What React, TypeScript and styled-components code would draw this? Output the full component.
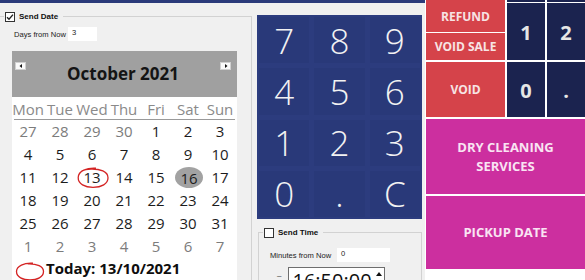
import React from 'react';
import styled, { createGlobalStyle } from 'styled-components';

const GlobalStyle = createGlobalStyle`
  html, body { margin: 0; padding: 0; }
  body {
    width: 585px;
    height: 280px;
    overflow: hidden;
    background: #f0f0f0;
    font-family: "Open Sans", "Noto Sans", sans-serif;
  }
  *, *::before, *::after { box-sizing: border-box; }
`;

const Screen = styled.div`
  width: 585px;
  height: 280px;
  display: flex;
  overflow: hidden;
  background: #f0f0f0;
`;

const LeftArea = styled.div`
  width: 425px;
  flex: none;
  display: flex;
  flex-direction: column;
`;

const TitleStrip = styled.div`
  height: 3px;
  flex: none;
  background: #2b3a7a;
`;

const Workspace = styled.div`
  flex: 1;
  min-height: 0;
  display: flex;
`;

const GroupBox = styled.div<{ $width: number; $top: number; $left: number; $leftBorder?: boolean }>`
  width: ${p => p.$width}px;
  flex: none;
  margin-top: ${p => p.$top}px;
  margin-left: ${p => p.$left}px;
  border-top: 1px solid #d2d2d2;
  border-right: 1px solid #d2d2d2;
  border-left: ${p => (p.$leftBorder ? '1px solid #d2d2d2' : 'none')};
  display: flex;
  flex-direction: column;
  align-items: flex-start;
`;

const GroupHeader = styled.div`
  margin-top: -6px;
  margin-left: 4px;
  height: 11px;
  padding: 0 5px 0 1px;
  display: inline-flex;
  align-items: center;
  gap: 4px;
  background: #f0f0f0;
`;

const CheckBox = styled.span`
  width: 10px;
  height: 10px;
  border: 1px solid #333;
  background: #fff;
  display: inline-flex;
  align-items: center;
  justify-content: center;
`;

const GroupLabel = styled.span`
  font-family: "Liberation Sans", Arial, sans-serif;
  font-weight: bold;
  font-size: 8px;
  color: #111;
  line-height: 11px;
`;

const FieldRow = styled.div<{ $top: number; $left: number }>`
  margin-top: ${p => p.$top}px;
  margin-left: ${p => p.$left}px;
  height: 14px;
  display: flex;
  align-items: center;
`;

const FieldLabel = styled.span<{ $width: number }>`
  width: ${p => p.$width}px;
  font-family: "Liberation Sans", Arial, sans-serif;
  font-size: 7.6px;
  color: #222;
  white-space: nowrap;
`;

const FieldValue = styled.span<{ $width: number }>`
  width: ${p => p.$width}px;
  height: 14px;
  background: #fff;
  padding: 0 0 0 4px;
  font-family: "Liberation Sans", Arial, sans-serif;
  font-size: 7.6px;
  line-height: 11px;
  color: #222;
`;

/* Calendar */
const Calendar = styled.div`
  margin-top: 10px;
  margin-left: 12px;
  width: 225px;
  flex: 1;
  display: flex;
  flex-direction: column;
`;

const CalHeader = styled.div`
  height: 46px;
  flex: none;
  background: #a0a0a0;
  display: grid;
  grid-template-columns: 11px 1fr 11px;
  align-items: start;
  padding: 11px 6px 0 3px;
`;

const NavButton = styled.span`
  width: 11px;
  height: 8px;
  background: #fafafa;
  border: 1px solid #d0d0d0;
  display: flex;
  align-items: center;
  justify-content: center;
`;

const MonthTitle = styled.span`
  text-align: center;
  font-weight: 700;
  font-size: 17px;
  line-height: 24px;
  color: #141414;
  margin-top: 0;
`;

const CalBody = styled.div`
  flex: 1;
  background: #fff;
  display: flex;
  flex-direction: column;
`;

const WeekGrid = styled.div`
  display: grid;
  grid-template-columns: repeat(7, 32px);
`;

const DayName = styled.span`
  height: 22px;
  padding-top: 2px;
  line-height: 20px;
  text-align: center;
  font-size: 15px;
  color: #8a8a8a;
`;

const Rule = styled.div`
  height: 1px;
  margin: 0 2px;
  background: #9a9a9a;
`;

const DayCell = styled.span<{ $muted?: boolean }>`
  position: relative;
  height: 23px;
  display: flex;
  justify-content: center;
  align-items: flex-start;
  line-height: 23px;
  font-size: 15px;
  color: ${p => (p.$muted ? '#7c7c7c' : '#1c1c1c')};
`;

const SelectedMark = styled.span`
  margin-top: 1px;
  margin-left: 2px;
  width: 28px;
  height: 21px;
  border-radius: 50%;
  background: #a2a2a2;
  text-align: center;
  line-height: 22px;
`;

const TodayCircle = styled.svg`
  position: absolute;
  left: 0;
  top: 0;
  pointer-events: none;
`;

const TodayRow = styled.div`
  height: 22px;
  display: flex;
  align-items: flex-start;
  padding-left: 3px;
`;

const TodayText = styled.span`
  margin-left: 1px;
  font-weight: 700;
  font-size: 15px;
  line-height: 20px;
  color: #0e0e0e;
`;

/* Middle column */
const MiddleColumn = styled.div`
  width: 173px;
  flex: none;
  display: flex;
  flex-direction: column;
`;

const Numpad = styled.div`
  margin: 12px 0 0 5px;
  width: 165px;
  height: 204px;
  flex: none;
  padding: 2px;
  display: grid;
  grid-template-columns: repeat(3, 1fr);
  grid-template-rows: repeat(4, 1fr);
  gap: 5px;
  background: #2c3c7e;
`;

const PadKey = styled.div`
  background: #293979;
  color: #f2f2f2;
  font-size: 35px;
  font-weight: 300;
  display: flex;
  align-items: center;
  justify-content: center;
  line-height: 1;
`;

const TimeRow = styled.div`
  margin-top: 5px;
  margin-left: 18px;
  display: flex;
  align-items: flex-start;
  gap: 7px;
`;

const TimeCaption = styled.span`
  font-family: "Liberation Sans", Arial, sans-serif;
  font-size: 8px;
  line-height: 8px;
  color: #333;
  margin-top: 5px;
`;

const TimeBox = styled.div`
  width: 97px;
  height: 26px;
  border: 1px solid #6e6e6e;
  background: #fff;
  display: flex;
  align-items: flex-start;
  justify-content: space-between;
  padding: 0 2px 0 3px;
`;

const TimeText = styled.span`
  font-size: 20px;
  line-height: 24px;
  color: #111;
  margin-top: 1px;
`;

const SpinArrow = styled.svg`
  margin-top: 4px;
`;

/* Right panel */
const RightPanel = styled.div`
  width: 160px;
  flex: none;
  padding-left: 1px;
  background: #fff;
  display: flex;
  flex-direction: column;
  gap: 2px;
`;

const TopBlock = styled.div`
  height: 117px;
  display: flex;
  gap: 2px;
`;

const Stack = styled.div<{ $width: number }>`
  width: ${p => p.$width}px;
  display: flex;
  flex-direction: column;
`;

const RedKey = styled.div<{ $h: number; $gap: number }>`
  height: ${p => p.$h}px;
  margin-top: ${p => p.$gap}px;
  background: #d5434a;
  color: #f7e4e4;
  font-weight: 700;
  font-size: 12px;
  display: flex;
  align-items: center;
  justify-content: center;
`;

const DarkRow = styled.div<{ $h: number; $gap: number }>`
  height: ${p => p.$h}px;
  margin-top: ${p => p.$gap}px;
  display: grid;
  grid-template-columns: 38px 38px;
  gap: 2px;
`;

const DarkKey = styled.div`
  background: #1b234f;
  color: #e6e6e6;
  font-weight: 700;
  font-size: 20px;
  display: flex;
  align-items: center;
  justify-content: center;
  padding-top: 2px;
`;

const MagentaKey = styled.div<{ $h: number }>`
  height: ${p => p.$h}px;
  background: #cc2f9f;
  color: #f9e4f3;
  font-weight: 700;
  font-size: 13px;
  line-height: 19px;
  text-align: center;
  display: flex;
  align-items: center;
  justify-content: center;
`;

const CheckMark = () => (
  <svg width="8" height="8" viewBox="0 0 8 8">
    <path d="M1 4.2 L3 6.2 L7 1.6" fill="none" stroke="#222" strokeWidth="1.4" />
  </svg>
);

const Arrow = ({ dir }: { dir: 'left' | 'right' }) => (
  <svg width="4" height="4" viewBox="0 0 4 4">
    <path d={dir === 'left' ? 'M3 0 L3 4 L0.5 2 Z' : 'M1 0 L1 4 L3.5 2 Z'} fill="#111" />
  </svg>
);

type Day = { n: number; muted?: boolean; selected?: boolean; today?: boolean };

const weeks: Day[][] = [
  [{ n: 27, muted: true }, { n: 28, muted: true }, { n: 29, muted: true }, { n: 30, muted: true }, { n: 1 }, { n: 2 }, { n: 3 }],
  [{ n: 4 }, { n: 5 }, { n: 6 }, { n: 7 }, { n: 8 }, { n: 9 }, { n: 10 }],
  [{ n: 11 }, { n: 12 }, { n: 13, today: true }, { n: 14 }, { n: 15 }, { n: 16, selected: true }, { n: 17 }],
  [{ n: 18 }, { n: 19 }, { n: 20 }, { n: 21 }, { n: 22 }, { n: 23 }, { n: 24 }],
  [{ n: 25 }, { n: 26 }, { n: 27 }, { n: 28 }, { n: 29 }, { n: 30 }, { n: 31 }],
  [1, 2, 3, 4, 5, 6, 7].map(n => ({ n, muted: true })),
];

const dayNames = ['Mon', 'Tue', 'Wed', 'Thu', 'Fri', 'Sat', 'Sun'];
const padKeys = ['7', '8', '9', '4', '5', '6', '1', '2', '3', '0', '.', 'C'];

export default function App() {
  return (
    <>
      <GlobalStyle />
      <Screen>
        <LeftArea>
          <TitleStrip />
          <Workspace>
            <GroupBox $width={252} $top={13} $left={0}>
              <GroupHeader>
                <CheckBox>
                  <CheckMark />
                </CheckBox>
                <GroupLabel>Send Date</GroupLabel>
              </GroupHeader>
              <FieldRow $top={5} $left={14}>
                <FieldLabel $width={54}>Days from Now</FieldLabel>
                <FieldValue $width={29}>3</FieldValue>
              </FieldRow>
              <Calendar>
                <CalHeader>
                  <NavButton>
                    <Arrow dir="left" />
                  </NavButton>
                  <MonthTitle>October 2021</MonthTitle>
                  <NavButton>
                    <Arrow dir="right" />
                  </NavButton>
                </CalHeader>
                <CalBody>
                  <WeekGrid>
                    {dayNames.map(d => (
                      <DayName key={d}>{d}</DayName>
                    ))}
                  </WeekGrid>
                  <Rule />
                  <WeekGrid>
                    {weeks.flat().map((d, i) => (
                      <DayCell key={i} $muted={d.muted}>
                        {d.selected ? <SelectedMark>{d.n}</SelectedMark> : d.n}
                        {d.today && (
                          <TodayCircle width="34" height="24" viewBox="0 0 34 24">
                            <path
                              d="M20 2.2 C11 1.6 2.4 5 2.2 11.5 C2 18 9 21.3 17 21.3 C25.5 21.3 32 18 32 11.8 C32 5.5 24 2.8 15 3 C11 3.1 8 3.8 5.5 5"
                              fill="none"
                              stroke="#d42424"
                              strokeWidth="1.3"
                            />
                          </TodayCircle>
                        )}
                      </DayCell>
                    ))}
                  </WeekGrid>
                  <TodayRow>
                    <svg width="30" height="22" viewBox="0 0 30 22">
                      <path
                        d="M18 5.2 C9 4.6 1.5 8 1.5 13.5 C1.5 19 8 22 15 22 C22 22 28.5 19 28.5 13.5 C28.5 8.5 22 5.5 13 5.8"
                        fill="none"
                        stroke="#d42424"
                        strokeWidth="1.3"
                      />
                    </svg>
                    <TodayText>Today: 13/10/2021</TodayText>
                  </TodayRow>
                </CalBody>
              </Calendar>
            </GroupBox>
            <MiddleColumn>
              <Numpad>
                {padKeys.map(k => (
                  <PadKey key={k}>{k}</PadKey>
                ))}
              </Numpad>
              <GroupBox $width={164} $top={13} $left={6} $leftBorder>
                <GroupHeader>
                  <CheckBox />
                  <GroupLabel>Send Time</GroupLabel>
                </GroupHeader>
                <FieldRow $top={10} $left={11}>
                  <FieldLabel $width={67}>Minutes from Now</FieldLabel>
                  <FieldValue $width={53}>0</FieldValue>
                </FieldRow>
                <TimeRow>
                  <TimeCaption>–</TimeCaption>
                  <TimeBox>
                    <TimeText>16:50:00</TimeText>
                    <SpinArrow width="6" height="4" viewBox="0 0 6 4">
                      <path d="M0 4 L3 0 L6 4 Z" fill="#111" />
                    </SpinArrow>
                  </TimeBox>
                </TimeRow>
              </GroupBox>
            </MiddleColumn>
          </Workspace>
        </LeftArea>
        <RightPanel>
          <TopBlock>
            <Stack $width={79}>
              <RedKey $h={32} $gap={0}>REFUND</RedKey>
              <RedKey $h={27} $gap={1}>VOID SALE</RedKey>
              <RedKey $h={55} $gap={2}>VOID</RedKey>
            </Stack>
            <Stack $width={78}>
              <DarkRow $h={2} $gap={0}>
                <DarkKey />
                <DarkKey />
              </DarkRow>
              <DarkRow $h={57} $gap={1}>
                <DarkKey>1</DarkKey>
                <DarkKey>2</DarkKey>
              </DarkRow>
              <DarkRow $h={55} $gap={2}>
                <DarkKey>0</DarkKey>
                <DarkKey>.</DarkKey>
              </DarkRow>
            </Stack>
          </TopBlock>
          <MagentaKey $h={75}>
            DRY CLEANING
            <br />
            SERVICES
          </MagentaKey>
          <MagentaKey $h={73}>PICKUP DATE</MagentaKey>
        </RightPanel>
      </Screen>
    </>
  );
}
